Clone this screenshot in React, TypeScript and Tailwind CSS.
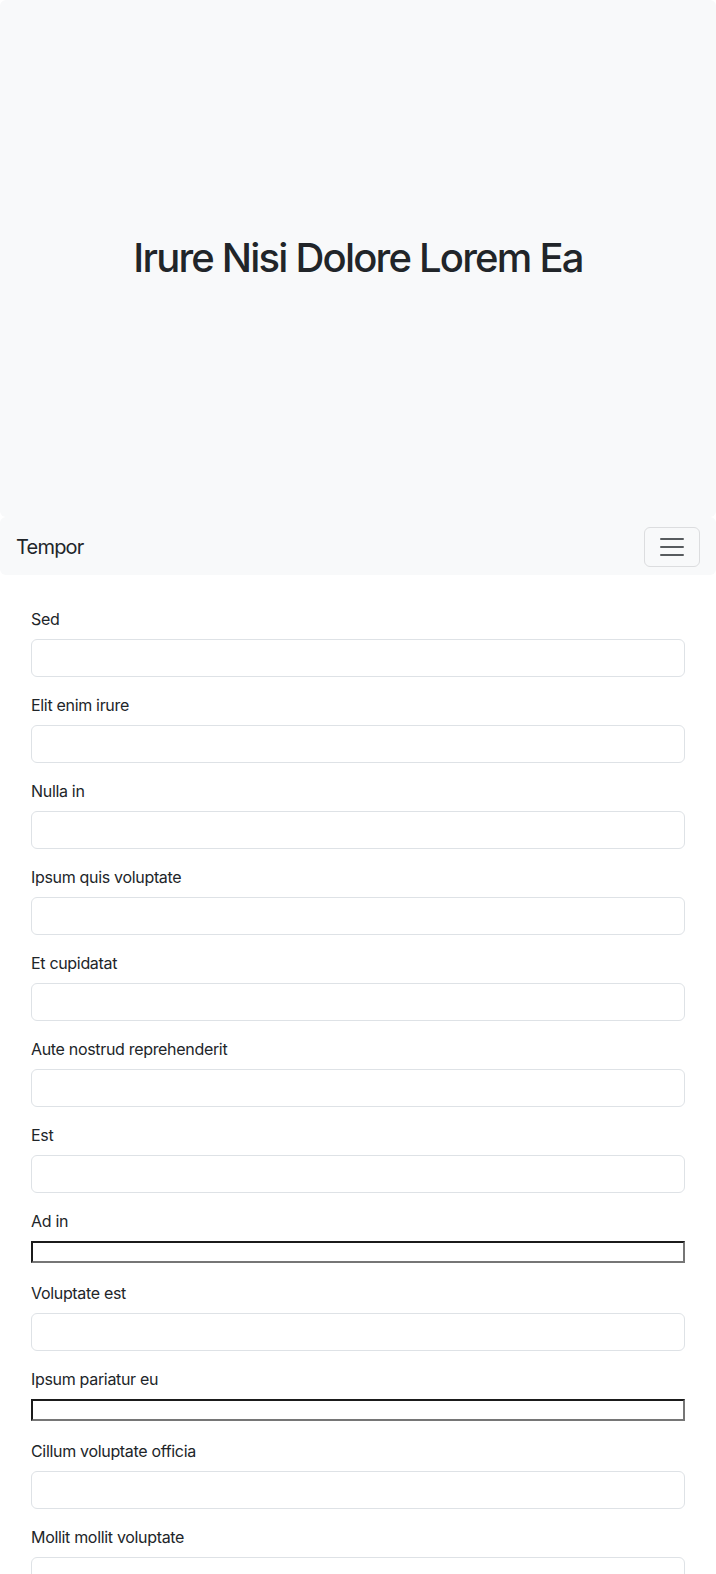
import React from "react";

const fields = [
  { label: "Sed", plain: false },
  { label: "Elit enim irure", plain: false },
  { label: "Nulla in", plain: false },
  { label: "Ipsum quis voluptate", plain: false },
  { label: "Et cupidatat", plain: false },
  { label: "Aute nostrud reprehenderit", plain: false },
  { label: "Est", plain: false },
  { label: "Ad in", plain: true },
  { label: "Voluptate est", plain: false },
  { label: "Ipsum pariatur eu", plain: true },
  { label: "Cillum voluptate officia", plain: false },
  { label: "Mollit mollit voluptate", plain: false },
];

function App() {
  return (
    <div
      className="min-h-screen bg-white text-[#212529]"
      style={{ fontFamily: "Inter, Roboto, 'Liberation Sans', sans-serif" }}
    >
      {/* Hero */}
      <div className="h-[517px] bg-[#f8f9fa] rounded-md flex items-center justify-center pb-[2px]">
        <h1 className="text-[40px] leading-[1.2] font-medium tracking-[-0.045em]">
          Irure Nisi Dolore Lorem Ea
        </h1>
      </div>

      {/* Navbar */}
      <nav className="bg-[#f8f9fa] rounded-md flex items-center justify-between px-4 pt-[10px] pb-[8px]">
        <span className="text-xl leading-[30px] tracking-[-0.04em]">Tempor</span>
        <button className="w-[56px] h-[40px] border border-[#dcdddf] rounded-md flex items-center justify-center">
          <svg width="30" height="30" viewBox="0 0 30 30">
            <path
              d="M4 7h22M4 15h22M4 23h22"
              stroke="rgba(33,37,41,0.75)"
              strokeWidth="2"
              strokeLinecap="round"
              strokeMiterlimit="10"
            />
          </svg>
        </button>
      </nav>

      {/* Form */}
      <form className="px-[31px] pt-[32px]">
        {fields.map((f) => (
          <div key={f.label}>
            <label className="block text-base leading-6 mb-2 tracking-[-0.02em]">
              {f.label}
            </label>
            {f.plain ? (
              <input
                type="text"
                className="block w-full h-[22px] mb-[18px] border-2 border-t-[#1b1b1b] border-l-[#1b1b1b] border-b-[#767676] border-r-[#767676] bg-white"
              />
            ) : (
              <input
                type="text"
                className="block w-full h-[38px] mb-4 border border-[#dee2e6] rounded-md bg-white px-3"
              />
            )}
          </div>
        ))}
      </form>
    </div>
  );
}

export default App;
